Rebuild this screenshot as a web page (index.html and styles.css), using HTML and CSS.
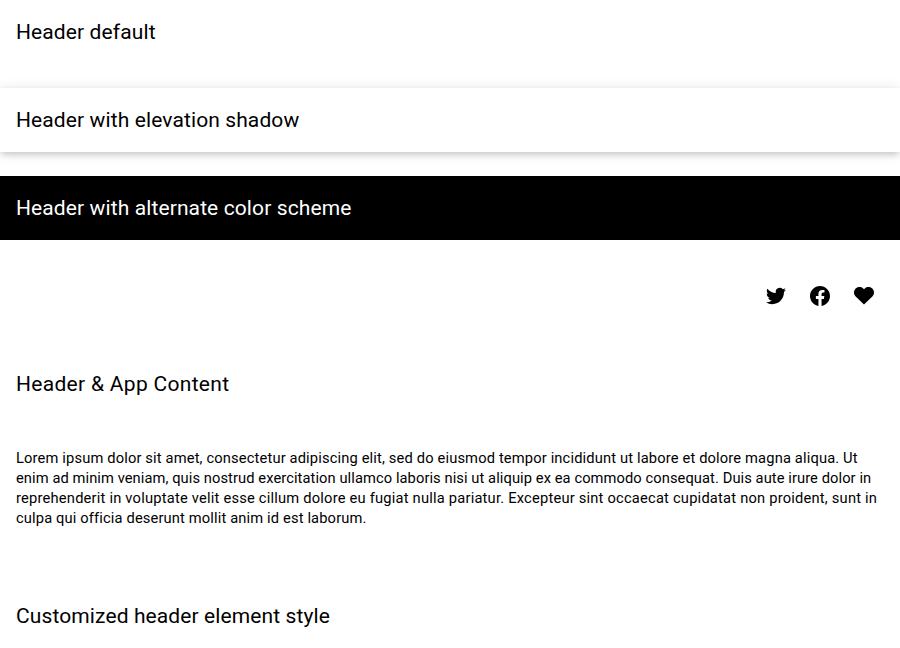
FILE: index.html
```html
<!DOCTYPE html>
<html lang="en">
<head>
<meta charset="utf-8">
<title>Header</title>
<link rel="stylesheet" href="styles.css">
</head>
<body>
<header class="header"><h1 class="title">Header default</h1></header>
<header class="header elevated"><h1 class="title">Header with elevation shadow</h1></header>
<header class="header alternate"><h1 class="title">Header with alternate color scheme</h1></header>
<header class="header actions">
<svg class="icon" viewBox="0 0 24 24"><path transform="translate(2 2) scale(.8333)" d="M23.953 4.570a10 10 0 0 1-2.825.775 4.958 4.958 0 0 0 2.163-2.723c-.951.555-2.005.959-3.127 1.184a4.920 4.920 0 0 0-8.384 4.482C7.690 8.095 4.067 6.130 1.640 3.162a4.822 4.822 0 0 0-.666 2.475c0 1.710.870 3.213 2.188 4.096a4.904 4.904 0 0 1-2.228-.616v.060a4.923 4.923 0 0 0 3.946 4.827 4.996 4.996 0 0 1-2.212.085 4.936 4.936 0 0 0 4.604 3.417 9.867 9.867 0 0 1-6.102 2.105c-.390 0-.779-.023-1.170-.067a13.995 13.995 0 0 0 7.557 2.209c9.053 0 13.998-7.496 13.998-13.985 0-.210 0-.420-.015-.630A9.935 9.935 0 0 0 24 4.590z"/></svg>
<svg class="icon" viewBox="0 0 24 24"><path d="M22 12c0-5.520-4.480-10-10-10S2 6.480 2 12c0 5 3.660 9.130 8.440 9.880v-6.990H7.900V12h2.540V9.800c0-2.510 1.490-3.890 3.780-3.890 1.090 0 2.230.19 2.230.19v2.470h-1.260c-1.240 0-1.630.77-1.630 1.560V12h2.780l-.45 2.890h-2.330v6.990C18.340 21.130 22 17 22 12z"/></svg>
<svg class="icon" viewBox="0 0 24 24"><path d="M12 20.400L3.400 12.200C1.500 10.200 1.500 6.900 3.400 4.800 5.500 2.500 9.100 2.500 11.200 4.500L12 5.300l.8-.8c2.100-2 5.700-2 7.800.3 1.900 2.100 1.900 5.400 0 7.400z"/></svg>
</header>
<header class="header"><h1 class="title wide">Header &amp; App Content</h1></header>
<main class="content">
<p class="line l1">Lorem ipsum dolor sit amet, consectetur adipiscing elit, sed do eiusmod tempor incididunt ut labore et dolore magna aliqua. Ut</p>
<p class="line l2">enim ad minim veniam, quis nostrud exercitation ullamco laboris nisi ut aliquip ex ea commodo consequat. Duis aute irure dolor in</p>
<p class="line l3">reprehenderit in voluptate velit esse cillum dolore eu fugiat nulla pariatur. Excepteur sint occaecat cupidatat non proident, sunt in</p>
<p class="line l4">culpa qui officia deserunt mollit anim id est laborum.</p>
</main>
<header class="header"><h1 class="title">Customized header element style</h1></header>
</body>
</html>
```
FILE: styles.css
```css
* { box-sizing: border-box; }
body { margin: 0; background: #fff; color: #000; font-family: Roboto, sans-serif; overflow: hidden; }
.header { height: 64px; margin-bottom: 24px; padding: 0 16px; display: flex; align-items: center; }
.elevated { box-shadow: 0 1px 14px rgba(0,0,0,.09), 0 3px 7px -1px rgba(0,0,0,.2); }
.alternate { background: #000; color: #fff; }
.actions { justify-content: flex-end; gap: 20px; padding-right: 24px; }
.icon { width: 24px; height: 24px; }
.title { margin: 0; font-size: 21px; font-weight: 400; line-height: 28px; letter-spacing: .11px; white-space: nowrap; }
.wide { letter-spacing: .3px; }
.content { padding: 8px 16px; margin-bottom: 48px; }
.line { margin: 0; font-size: 14.7px; line-height: 20px; white-space: nowrap; }
.l1 { letter-spacing: .148px; }
.l2 { letter-spacing: .078px; }
.l3 { letter-spacing: .205px; }
.l4 { letter-spacing: .14px; }
```
